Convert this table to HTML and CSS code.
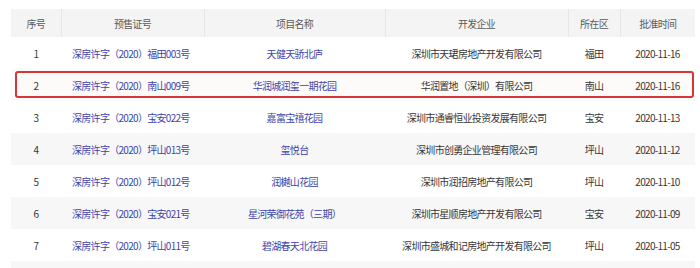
FILE: index.html
```html
<!DOCTYPE html>
<html lang="zh">
<head>
<meta charset="utf-8">
<link rel="stylesheet" href="styles.css">
</head>
<body>
<div class="wrap">
<table class="tbl">
  <colgroup>
    <col class="c1"><col class="c2"><col class="c3"><col class="c4"><col class="c5"><col class="c6">
  </colgroup>
  <thead>
    <tr><th>序号</th><th>预售证号</th><th>项目名称</th><th>开发企业</th><th>所在区</th><th>批准时间</th></tr>
  </thead>
  <tbody>
    <tr><td>1</td><td class="lnk">深房许字（2020）福田003号</td><td class="lnk">天健天骄北庐</td><td>深圳市天珺房地产开发有限公司</td><td>福田</td><td>2020-11-16</td></tr>
    <tr class="hl"><td>2</td><td class="lnk">深房许字（2020）南山009号</td><td class="lnk">华润城润玺一期花园</td><td>华润置地（深圳）有限公司</td><td>南山</td><td>2020-11-16</td></tr>
    <tr><td>3</td><td class="lnk">深房许字（2020）宝安022号</td><td class="lnk">嘉富宝禧花园</td><td>深圳市通睿恒业投资发展有限公司</td><td>宝安</td><td>2020-11-13</td></tr>
    <tr class="alt"><td>4</td><td class="lnk">深房许字（2020）坪山013号</td><td class="lnk">玺悦台</td><td>深圳市创勇企业管理有限公司</td><td>坪山</td><td>2020-11-12</td></tr>
    <tr><td>5</td><td class="lnk">深房许字（2020）坪山012号</td><td class="lnk">润樾山花园</td><td>深圳市润招房地产有限公司</td><td>坪山</td><td>2020-11-10</td></tr>
    <tr class="alt"><td>6</td><td class="lnk">深房许字（2020）宝安021号</td><td class="lnk">星河荣御花苑（三期）</td><td>深圳市星顺房地产开发有限公司</td><td>宝安</td><td>2020-11-09</td></tr>
    <tr><td>7</td><td class="lnk">深房许字（2020）坪山011号</td><td class="lnk">碧湖春天北花园</td><td>深圳市盛城和记房地产开发有限公司</td><td>坪山</td><td>2020-11-05</td></tr>
    <tr class="alt"><td></td><td></td><td></td><td></td><td></td><td></td></tr>
  </tbody>
</table>
</div>
</body>
</html>
```

FILE: styles.css
```css
html, body { margin: 0; padding: 0; background: #ffffff; overflow: hidden; }
body { width: 700px; height: 268px; }
.wrap { padding: 9px 5px 0 11px; }
.tbl {
  width: 684px;
  border-collapse: collapse;
  table-layout: fixed;
  font-family: "Noto Sans CJK SC", "Noto Sans", sans-serif;
  font-size: 10px;
  letter-spacing: -0.7px;
  color: #363636;
}
.c1 { width: 50px; }
.c2 { width: 143px; }
.c3 { width: 181px; }
.c4 { width: 183px; }
.c5 { width: 52px; }
.c6 { width: 75px; }
.tbl th {
  height: 28px;
  padding: 0;
  background: #f4f4f4;
  color: #5a5a5a;
  font-weight: normal;
  text-align: center;
  border-left: 1px solid #e6e6e6;
}
.tbl th:first-child { border-left: none; }
.tbl td {
  height: 32px;
  padding: 0;
  text-align: center;
  white-space: nowrap;
}
.tbl td.lnk { color: #3d44a8; }
.tbl td:nth-child(2) { text-align: left; padding-left: 11px; }
.tbl tr.alt td { background: #f7f7f8; }
.tbl tr.hl td { background: #fdfafa; }
.tbl tr.hl td:first-child { position: relative; }
.tbl tr.hl td:first-child::after {
  content: "";
  position: absolute;
  left: 4px;
  top: 2px;
  width: 675px;
  height: 23px;
  border: 2px solid #d6363a;
  border-radius: 3px;
  pointer-events: none;
}
```
